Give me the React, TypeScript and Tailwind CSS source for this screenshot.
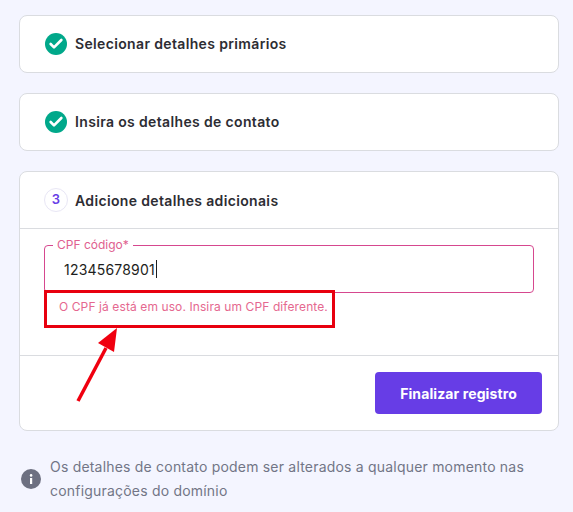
import { Check } from 'lucide-react'

const font = { fontFamily: 'Inter, "Liberation Sans", sans-serif' }

function DoneStep({ title }: { title: string }) {
  return (
    <div className="flex h-[58px] items-center rounded-lg border border-[#dadce0] bg-white pl-[25px]">
      <span className="flex h-[22px] w-[22px] items-center justify-center rounded-full bg-[#00a88a]">
        <Check size={16} strokeWidth={4} className="text-white" />
      </span>
      <span className="ml-[8px] pb-px text-[14px] font-semibold tracking-[0.35px] text-[#2d2d33]">{title}</span>
    </div>
  )
}

export default function App() {
  return (
    <div className="h-[512px] w-[573px] overflow-hidden bg-[#f4f5ff] px-[19px] pt-[15px]" style={font}>
      <div className="flex w-[540px] flex-col gap-[20px]">
        <DoneStep title="Selecionar detalhes primários" />
        <DoneStep title="Insira os detalhes de contato" />

        <div className="relative h-[260px] rounded-lg border border-[#dadce0] bg-white">
          <div className="flex h-[57px] items-center border-b border-[#dadce0] pl-[24px]">
            <span className="flex h-[24px] w-[24px] items-center justify-center rounded-full border border-[#e8e6f5] text-[13px] font-semibold text-[#673de6]">3</span>
            <span className="ml-[7px] text-[14px] font-semibold tracking-[0.35px] text-[#2d2d33]">Adicione detalhes adicionais</span>
          </div>

          <div className="h-[127px] border-b border-[#dadce0] px-[24px] pt-[16px]">
            <div className="relative h-[48px] w-[490px] rounded border border-[#d6488f]">
              <span className="absolute -top-[8px] left-[8px] bg-white px-[4px] text-[12px] leading-[14px] text-[#e0608f]">CPF código*</span>
              <div className="flex h-full items-center pl-[19px] text-[14px] tracking-[0.2px] text-[#1d1e20]">
                12345678901<span className="ml-px h-[18px] w-px bg-[#1d1e20]" />
              </div>
            </div>
            <p className="pl-[15px] pt-[5px] text-[12px] tracking-[0.1px] text-[#e5688f]">O CPF já está em uso. Insira um CPF diferente.</p>
          </div>

          <div className="flex justify-end pr-[16px] pt-[16px]">
            <button className="h-[42px] w-[167px] rounded bg-[#673de6] text-[14px] font-bold tracking-[0.1px] text-white">Finalizar registro</button>
          </div>

          {/* annotation on top of the screenshot */}
          <div className="absolute left-[24px] top-[118px] h-[38px] w-[291px] border-[3px] border-[#e8000f]" />
          <svg className="absolute left-[50px] top-[152px]" width="56" height="82" viewBox="0 0 56 82">
            <path d="M8 77 L36 24" stroke="#f0000f" strokeWidth="3.5" fill="none" />
            <path d="M47 4 L28 19 L44 28 Z" fill="#f0000f" />
          </svg>
        </div>

        <div className="mt-[4px] flex items-center pl-[2px]">
          <svg width="20" height="20" viewBox="0 0 20 20" className="shrink-0">
            <circle cx="10" cy="10" r="10" fill="#6d7081" />
            <rect x="9" y="9" width="2.2" height="6" fill="#fff" />
            <circle cx="10.1" cy="6.4" r="1.3" fill="#fff" />
          </svg>
          <p className="ml-[9px] w-[490px] text-[14px] leading-[24px] tracking-[0.2px] text-[#727586]">
            Os detalhes de contato podem ser alterados a qualquer momento nas configurações do domínio
          </p>
        </div>
      </div>
    </div>
  )
}
